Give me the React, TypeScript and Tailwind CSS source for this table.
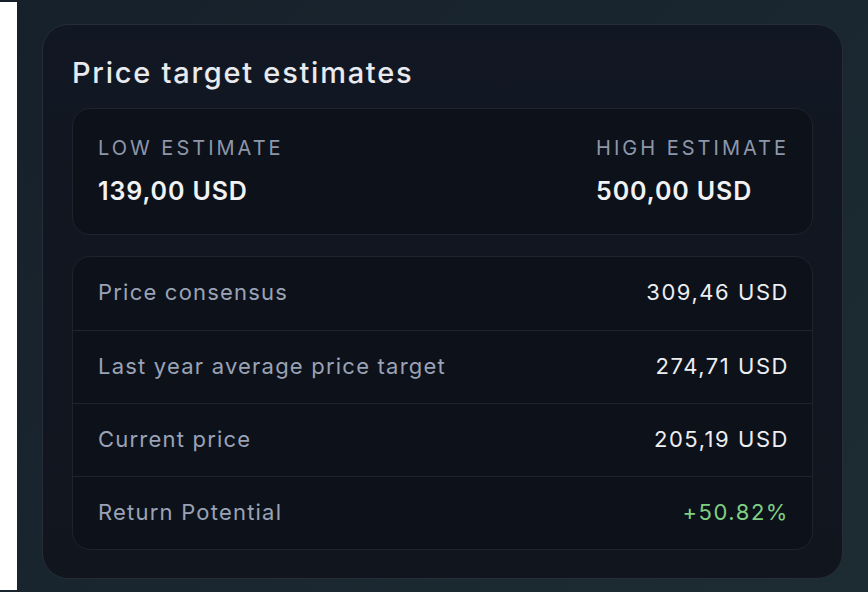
const ESTIMATES = [
  { label: "LOW ESTIMATE", value: "139,00 USD" },
  { label: "HIGH ESTIMATE", value: "500,00 USD" },
]

const ROWS = [
  { label: "Price consensus", value: "309,46 USD" },
  { label: "Last year average price target", value: "274,71 USD" },
  { label: "Current price", value: "205,19 USD" },
  { label: "Return Potential", value: "+50.82%", positive: true },
]

export default function App() {
  return (
    <div
      className="flex h-[592px] w-[868px] overflow-hidden bg-[linear-gradient(135deg,#16202a_0%,#1a2730_60%,#1d2c32_100%)]"
      style={{ fontFamily: "Inter, 'Liberation Sans', sans-serif" }}
    >
      {/* white gutter on the left */}
      <div className="my-[2px] w-[17px] shrink-0 bg-white" />

      <div className="flex-1 px-[25px] pt-[24px]">
        <section className="flex h-[555px] w-[801px] flex-col rounded-[26px] border border-[#262d38] bg-[linear-gradient(180deg,#121823_0%,#10151e_100%)] px-[29px] pt-[29px]">
          <h2 className="text-[29px] font-medium leading-[38px] tracking-[0.06em] text-[#e8eaee]">
            Price target estimates
          </h2>

          <div className="mt-[16px] flex h-[127px] items-start justify-between rounded-[18px] border border-[#1e242e] bg-[#0d111a] pl-[25px] pr-[23px] pt-[26px]">
            {ESTIMATES.map((e) => (
              <div key={e.label} className="flex flex-col">
                <span className="text-[20px] leading-[26px] tracking-[0.15em] text-[#8e97aa]">
                  {e.label}
                </span>
                <span className="mt-[14px] text-[25px] font-semibold leading-[32px] tracking-[0.035em] text-[#f1f2f4]">
                  {e.value}
                </span>
              </div>
            ))}
          </div>

          <div className="mt-[21px] flex flex-col rounded-[18px] border border-[#1e242e] bg-[#0d111a]">
            {ROWS.map((r, i) => (
              <div
                key={r.label}
                className={`flex h-[73px] items-center justify-between pl-[25px] pr-[23px] pb-[2px] ${
                  i > 0 ? "border-t border-[#1f252f]" : ""
                }`}
              >
                <span className="text-[22px] tracking-[0.055em] text-[#9aa3b6]">{r.label}</span>
                <span
                  className={`text-[22px] tracking-[0.07em] ${
                    r.positive ? "text-[#7fcf83]" : "text-[#eceef1]"
                  }`}
                >
                  {r.value}
                </span>
              </div>
            ))}
          </div>
        </section>
      </div>
    </div>
  )
}
